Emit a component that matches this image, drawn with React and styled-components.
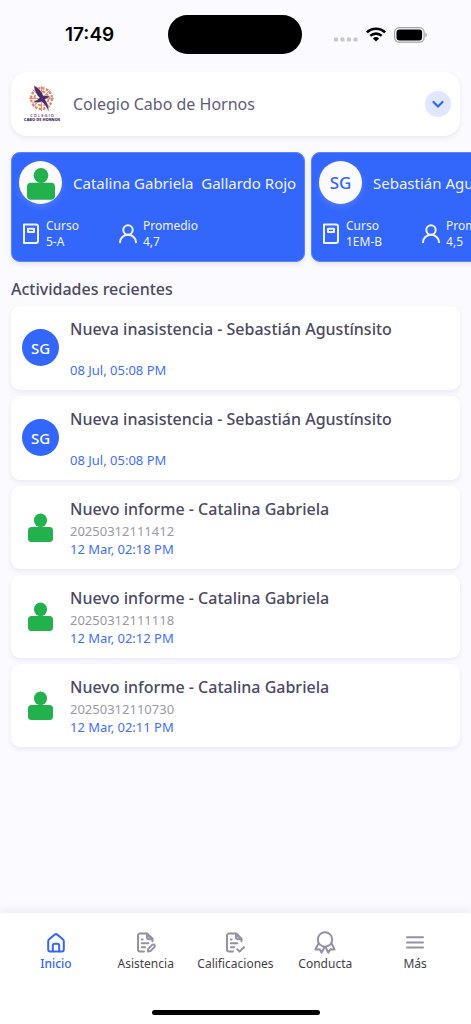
import * as React from "react";
import styled, { createGlobalStyle, css } from "styled-components";

const students = [
  {
    id: 1,
    name: "Catalina Gabriela  Gallardo Rojo",
    course: "5-A",
    average: "4,7",
  },
  {
    id: 2,
    name: "Sebastián Agustínsito",
    initials: "SG",
    course: "1EM-B",
    average: "4,5",
  },
];

const activities = [
  {
    id: 1,
    title: "Nueva inasistencia - Sebastián Agustínsito",
    initials: "SG",
    date: "08 Jul, 05:08 PM",
  },
  {
    id: 2,
    title: "Nueva inasistencia - Sebastián Agustínsito",
    initials: "SG",
    date: "08 Jul, 05:08 PM",
  },
  {
    id: 3,
    title: "Nuevo informe - Catalina Gabriela",
    detail: "20250312111412",
    date: "12 Mar, 02:18 PM",
  },
  {
    id: 4,
    title: "Nuevo informe - Catalina Gabriela",
    detail: "20250312111118",
    date: "12 Mar, 02:12 PM",
  },
  {
    id: 5,
    title: "Nuevo informe - Catalina Gabriela",
    detail: "20250312110730",
    date: "12 Mar, 02:11 PM",
  },
];

const tabs = [
  { id: "inicio", label: "Inicio", Icon: HomeIcon, active: true },
  { id: "asistencia", label: "Asistencia", Icon: AttendanceIcon },
  { id: "calificaciones", label: "Calificaciones", Icon: GradesIcon },
  { id: "conducta", label: "Conducta", Icon: MedalIcon },
  { id: "mas", label: "Más", Icon: MenuIcon },
];

function App() {
  return (
    <>
      <GlobalStyle />
      <Screen>
        <StatusBar>
          <Time>17:49</Time>
          <Island />
          <StatusIcons>
            <SignalIcon />
            <WifiIcon />
            <BatteryIcon />
          </StatusIcons>
        </StatusBar>
        <Main>
          <SchoolCard>
            <SchoolLogo />
            <SchoolName>Colegio Cabo de Hornos</SchoolName>
            <ExpandButton type="button" aria-label="Cambiar colegio">
              <svg width="14" height="14" viewBox="0 0 14 14">
                <path d="M2.5 5 7 9.5 11.5 5" {...stroke} strokeWidth="2.2" />
              </svg>
            </ExpandButton>
          </SchoolCard>
          <StudentList>
            {students.map((student) => (
              <StudentCard key={student.id}>
                <StudentHeader>
                  <StudentAvatar>
                    {student.initials || <PersonShape width="28" />}
                  </StudentAvatar>
                  <StudentName>{student.name}</StudentName>
                </StudentHeader>
                <Stats>
                  <Stat>
                    <BookIcon />
                    <StatText>
                      <dt>Curso</dt>
                      <dd>{student.course}</dd>
                    </StatText>
                  </Stat>
                  <Stat>
                    <UserIcon />
                    <StatText>
                      <dt>Promedio</dt>
                      <dd>{student.average}</dd>
                    </StatText>
                  </Stat>
                </Stats>
              </StudentCard>
            ))}
          </StudentList>
          <SectionTitle>Actividades recientes</SectionTitle>
          <ActivityList>
            {activities.map((activity) => (
              <ActivityCard key={activity.id}>
                <ActivityAvatar $filled={Boolean(activity.initials)}>
                  {activity.initials || <PersonShape width="25" />}
                </ActivityAvatar>
                <ActivityBody>
                  <ActivityTitle>{activity.title}</ActivityTitle>
                  <ActivityDetail $empty={!activity.detail}>
                    {activity.detail}
                  </ActivityDetail>
                  <ActivityDate>{activity.date}</ActivityDate>
                </ActivityBody>
              </ActivityCard>
            ))}
          </ActivityList>
        </Main>
        <Footer>
          <TabBar>
            {tabs.map(({ id, label, Icon, active }) => (
              <Tab
                key={id}
                href={`#${id}`}
                $active={active}
                aria-current={active ? "page" : undefined}
              >
                <Icon />
                <TabLabel>{label}</TabLabel>
              </Tab>
            ))}
          </TabBar>
          <HomeIndicator />
        </Footer>
      </Screen>
    </>
  );
}

const stroke = {
  fill: "none",
  stroke: "currentColor",
  strokeWidth: 2,
  strokeLinecap: "round",
  strokeLinejoin: "round",
};

function IconBase({ children }) {
  return (
    <svg width="24" height="24" viewBox="0 0 24 24" aria-hidden="true" {...stroke}>
      {children}
    </svg>
  );
}

function HomeIcon() {
  return (
    <IconBase>
      <path d="M4.2 10.2c0-.9.4-1.5 1-2l5.6-4.6a1.9 1.9 0 0 1 2.4 0l5.6 4.6c.6.5 1 1.1 1 2v8.3a2 2 0 0 1-2 2H6.2a2 2 0 0 1-2-2z" />
      <path d="M8.8 20.3v-5.6a2 2 0 0 1 2-2h2.4a2 2 0 0 1 2 2v5.6" />
    </IconBase>
  );
}

function DocumentShape() {
  return (
    <>
      <path d="M10 20.5H6a2 2 0 0 1-2-2v-14a2 2 0 0 1 2-2h7l5.5 5.300v2.400" />
      <path d="M13 2.800v3.400a2 2 0 0 0 2 2h3.400z" fill="currentColor" fillOpacity="0.35" />
      <path d="M7.800 8.500h.8M7.800 12.300h6.600M7.800 16.200h3.400" />
    </>
  );
}

function AttendanceIcon() {
  return (
    <IconBase>
      <DocumentShape />
      <path d="m13.900 20.500.3-2.600 4-4a1.500 1.500 0 0 1 2.200 2.200l-4 4z" />
    </IconBase>
  );
}

function GradesIcon() {
  return (
    <IconBase>
      <DocumentShape />
      <path d="m14.300 18.300 2.300 2.300 4.400-4.400" />
    </IconBase>
  );
}

function MedalIcon() {
  return (
    <IconBase>
      <circle cx="12" cy="8.500" r="7.200" />
      <path d="m5.300 12.800-2.900 5.600 4.200-.1 2.100 3.300 2.800-5.600" />
      <path d="m18.700 12.800 2.900 5.600-4.200-.1-2.100 3.300-2.800-5.600" />
    </IconBase>
  );
}

function MenuIcon() {
  return (
    <IconBase>
      <path d="M4 6.300h16M4 11.400h16M4 16.500h16" />
    </IconBase>
  );
}

function BookIcon() {
  return (
    <IconBase>
      <path d="M5 2.600h12a2 2 0 0 1 2 2v14.400a2 2 0 0 1-2 2H5z" />
      <path d="M9 6.800h6v3.200H9z" />
    </IconBase>
  );
}

function UserIcon() {
  return (
    <IconBase>
      <circle cx="12" cy="8" r="4.700" />
      <path d="M4 20.200a8 7.500 0 0 1 16 0" />
    </IconBase>
  );
}

function PersonShape({ width }) {
  return (
    <svg width={width} viewBox="0 -3 28 35" fill="#23b14d" aria-hidden="true">
      <ellipse cx="14" cy="7.500" rx="7.300" ry="7.600" />
      <rect y="14.800" width="28" height="17" rx="4" />
    </svg>
  );
}

function SignalIcon() {
  return (
    <svg width="24" height="5" viewBox="0 0 24 5" fill="#c6c5cb">
      <rect y="0.500" width="4" height="4" rx="1.300" />
      <rect x="6.500" y="0.500" width="4" height="4" rx="1.300" />
      <rect x="13" y="0.500" width="4" height="4" rx="1.300" />
      <rect x="19.500" y="0.500" width="4" height="4" rx="1.300" />
    </svg>
  );
}

function WifiIcon() {
  return (
    <svg width="20" height="15" viewBox="0 0 20 15" fill="none" stroke="#000" strokeWidth="2.600">
      <path d="M.9 5.400a13 13 0 0 1 18.200 0" />
      <path d="M4.300 8.900a8.200 8.200 0 0 1 11.400 0" />
      <path d="M10 14.600 6.900 11.500a4.500 4.500 0 0 1 6.200 0z" fill="#000" stroke="none" />
    </svg>
  );
}

function BatteryIcon() {
  return (
    <svg width="33" height="16" viewBox="0 0 33 16">
      <rect x="0.600" y="0.600" width="29.500" height="14.600" rx="4.600" fill="none" stroke="#a3a2a8" strokeWidth="1.200" />
      <rect x="2.500" y="2.400" width="25.600" height="11" rx="3" fill="#000" />
      <path d="M31.400 5.500c1.900.8 1.900 4 0 4.800z" fill="#a3a2a8" />
    </svg>
  );
}

function SchoolLogo() {
  return (
    <svg width="38" height="38" viewBox="0 0 38 38" role="img" aria-label="Colegio Cabo de Hornos">
      <g fill="none" stroke="#e58463">
        <circle cx="18.500" cy="13.500" r="10.400" strokeWidth="2.400" strokeDasharray="2.600 1.500" />
        <circle cx="18.500" cy="13.500" r="7" strokeWidth="1.800" strokeDasharray="3.600 1.900" />
        <path d="M18.500 1v25M6 13.500h25M9.700 4.700l17.600 17.600M27.300 4.700 9.700 22.300" strokeWidth="0.900" />
      </g>
      <path
        d="M10.800.5c4.500 2 8.300 5.700 9.500 10.300 2.200-.6 4.500-.5 8.200 1.400-3 0-4.800 1-6.400 2.300 2.500 3.500 4 7.500 3.600 12.700-1.600-4.400-3.800-7.900-7-10.500-2.800 1-6 1.200-9.900.5 3-1 5.600-2.300 7.700-4.200C13.300 9.500 11.300 5.500 10.800.500z"
        fill="#4b2a68"
        stroke="#fff"
        strokeWidth="0.400"
      />
      <LogoText x="19" y="32">
        C O L E G I O
      </LogoText>
      <LogoText x="19" y="36" $bold>
        CABO DE HORNOS
      </LogoText>
    </svg>
  );
}

const GlobalStyle = createGlobalStyle`
  * {
    box-sizing: border-box;
  }

  body {
    margin: 0;
    background-color: #fafaff;
    color: #4c4963;
    font-family: "Noto Sans", "Open Sans", sans-serif;
  }

  svg {
    flex-shrink: 0;
  }
`;

const cardStyle = css`
  background-color: #fff;
  box-shadow: 0 2px 5px rgba(60, 55, 110, 0.09);
`;

const Screen = styled.div`
  display: flex;
  flex-direction: column;
  min-height: 100vh;
`;

const StatusBar = styled.header`
  display: grid;
  grid-template-columns: 1fr auto 1fr;
  align-items: center;
  padding: 15px 44px 18px 65px;
  column-gap: 8px;
`;

const Time = styled.time`
  color: #000;
  font: 600 19px/24px Inter, sans-serif;
`;

const Island = styled.div`
  width: 134px;
  height: 39px;
  margin-left: -22px;
  border-radius: 20px;
  background-color: #000;
`;

const StatusIcons = styled.div`
  display: flex;
  justify-content: flex-end;
  align-items: center;
  gap: 8px;

  svg:first-child {
    margin-top: 10px;
  }
`;

const Main = styled.main`
  display: flex;
  flex: 1;
  flex-direction: column;
  padding: 0 11px 24px;
`;

const SchoolCard = styled.section`
  ${cardStyle}
  display: flex;
  align-items: center;
  gap: 12px;
  padding: 13px 9px 13px 12px;
  border-radius: 16px;
`;

const LogoText = styled.text`
  fill: #4b2a68;
  font-family: "Open Sans", sans-serif;
  font-size: 4px;
  font-weight: ${({ $bold }) => ($bold ? 800 : 600)};
  text-anchor: middle;
`;

const SchoolName = styled.h1`
  flex: 1;
  margin: 0;
  color: #5f5c78;
  font-size: 16px;
  font-weight: 400;
  line-height: 24px;
`;

const ExpandButton = styled.button`
  display: flex;
  align-items: center;
  justify-content: center;
  width: 26px;
  height: 26px;
  padding: 0;
  border: 0;
  border-radius: 50%;
  background-color: #e0e7fe;
  color: #3366fa;
  cursor: pointer;
`;

const StudentList = styled.ul`
  display: flex;
  gap: 6px;
  margin: 16px -11px 0;
  padding: 0 11px 10px;
  list-style: none;
  overflow-x: auto;
  scrollbar-width: none;
`;

const StudentCard = styled.li`
  flex: none;
  min-width: 294px;
  padding: 8px 7px 11px;
  border: 1px solid #5c83fb;
  border-radius: 9px;
  background-color: #3366fa;
  box-shadow: 0 2px 5px rgba(60, 55, 110, 0.12);
  color: #f0f3ff;
`;

const StudentHeader = styled.div`
  display: flex;
  align-items: center;
  gap: 11px;
`;

const StudentAvatar = styled.div`
  display: flex;
  align-items: center;
  justify-content: center;
  width: 43px;
  height: 43px;
  border-radius: 50%;
  background-color: #fafaff;
  box-shadow: 0 3px 6px rgba(255, 255, 255, 0.15);
  color: #3366fa;
  font-size: 17px;
  font-weight: 500;
`;

const StudentName = styled.h2`
  margin: 0;
  font-size: 15px;
  font-weight: 400;
  line-height: 24px;
  white-space: pre;
`;

const Stats = styled.div`
  display: flex;
  gap: 37px;
  margin-top: 14px;
`;

const Stat = styled.div`
  display: flex;
  align-items: center;
  gap: 3px;
`;

const StatText = styled.dl`
  margin: 0;
  font-size: 12px;
  line-height: 16px;

  dd {
    margin: 0;
  }
`;

const SectionTitle = styled.h2`
  margin: 5px 0;
  font-size: 16px;
  font-weight: 500;
  line-height: 24px;
`;

const ActivityList = styled.ul`
  display: flex;
  flex-direction: column;
  gap: 6px;
  margin: 0;
  padding: 0;
  list-style: none;
`;

const ActivityCard = styled.li`
  ${cardStyle}
  display: flex;
  align-items: center;
  gap: 11px;
  padding: 11px 11px 12px;
  border-radius: 9px;
`;

const ActivityAvatar = styled.div`
  display: flex;
  flex-shrink: 0;
  align-items: center;
  justify-content: center;
  width: 37px;
  height: 37px;
  border-radius: 50%;
  background-color: ${({ $filled }) => ($filled ? "#3366fa" : "transparent")};
  color: #fff;
  font-size: 15px;
  font-weight: 500;
`;

const ActivityBody = styled.div`
  min-width: 0;
`;

const ActivityTitle = styled.h3`
  margin: 0;
  font-size: 16px;
  font-weight: 500;
  line-height: 24px;
`;

const ActivityDetail = styled.p`
  min-height: ${({ $empty }) => ($empty ? 21 : 20)}px;
  margin: 0;
  color: #9a98a9;
  font-size: 13px;
  line-height: 20px;
`;

const ActivityDate = styled.time`
  display: block;
  color: #3f70fa;
  font-size: 13px;
  line-height: 16px;
`;

const Footer = styled.footer`
  padding: 18px 11px 9px;
  background-color: #fff;
  box-shadow: 0 -2px 10px rgba(60, 55, 110, 0.08);
`;

const TabBar = styled.nav`
  display: grid;
  grid-template-columns: repeat(5, 1fr);
`;

const Tab = styled.a`
  display: flex;
  flex-direction: column;
  align-items: center;
  gap: 1px;
  color: ${({ $active }) => ($active ? "#3366fa" : "#9390a8")};
  text-decoration: none;

  span {
    color: ${({ $active }) => ($active ? "#3366fa" : "#3f3f46")};
    font-weight: ${({ $active }) => ($active ? 500 : 400)};
  }
`;

const TabLabel = styled.span`
  font-size: 12px;
  line-height: 16px;
`;

const HomeIndicator = styled.div`
  width: 168px;
  height: 5px;
  margin: 38px auto 0;
  border-radius: 3px;
  background-color: #000;
`;

export default App;
